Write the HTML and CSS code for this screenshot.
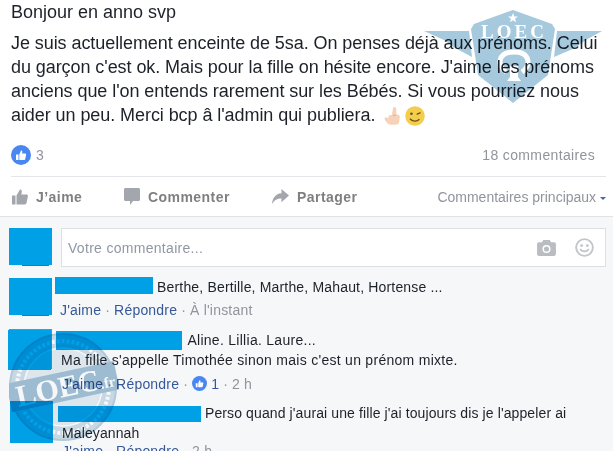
FILE: index.html
```html
<!DOCTYPE html>
<html lang="fr">
<head>
    <meta charset="UTF-8">
    <title>Bonjour en anno svp</title>
    <link rel="stylesheet" href="styles.css">
</head>
<body>
    <div class="post">
        <p class="post-title">Bonjour en anno svp</p>
        <p class="post-text">Je suis actuellement enceinte de 5sa. On penses déjà aux prénoms. Celui du garçon c'est ok. Mais pour la fille on hésite encore. J'aime les prénoms anciens que l'on entends rarement sur les Bébés. Si vous pourriez nous aider un peu. Merci bcp â l'admin qui publiera.
            <svg class="emoji" viewBox="0 0 18 20"><path fill="#f6d3b8" d="M11 1c1.200 0 1.800 1 1.800 2.200V8l2 .8c1.300.5 1.700 1.200 1.500 2.500l-.7 4.700c-.3 1.700-1.500 2.700-3.300 2.700H7.500c-2 0-3-.8-4-2L1.400 14c-.7-1-.4-2 .4-2.500.8-.5 1.400-.3 2.200.3l1 .8V10c.8-.9 2.400-1.200 3.300-.7l1-6C9.500 2 10 1 11 1z"/><path fill="#e6b18e" d="M9.500 9h3v1h-3z"/></svg><svg class="emoji wink" viewBox="0 0 18 18"><circle cx="9" cy="9" r="8.800" fill="#f3cd4b"/><path fill="none" stroke="#6b5320" stroke-width="1.200" d="M4.500 11.500c2 2.500 6 2.800 8.500.5M10.500 7.500l3.500-1.500"/><circle cx="5.800" cy="7" r="1.200" fill="#6b5320"/></svg>
        </p>
        <div class="stats">
            <span class="stats-likes">
                <svg class="like-badge" viewBox="0 0 20 20"><circle cx="10" cy="10" r="10" fill="#4a86f0"/><path fill="#fff" d="M5 9.500h2.500V15H5zM8.300 9.500 10 5.500c.9 0 1.400.6 1.300 1.500l-.2 1.600h3c.7 0 1.100.6 1 1.200l-.8 3.900c-.1.800-.6 1.300-1.400 1.300H8.300z"/></svg>
                3
            </span>
            <span>18 commentaires</span>
        </div>
        <div class="actions">
            <span class="action action-like">
                <svg class="action-icon" viewBox="0 0 16 16"><path fill="#a3a6ad" d="M0 7h3.500v9H0zM4.500 7 8 1c1.300 0 2 .9 1.800 2L9.300 6H14.500c1 0 1.600.8 1.400 1.700l-1.300 6.600c-.2 1-.9 1.700-1.900 1.700H4.500z"/></svg>J’aime
            </span>
            <span class="action action-comment">
                <svg class="action-icon" viewBox="0 0 16 17"><path fill="#a3a6ad" d="M1.500 0h13C15.400 0 16 .6 16 1.500v10c0 .9-.6 1.500-1.500 1.500H9l-3 4v-4H1.500C.6 13 0 12.400 0 11.500v-10C0 .6.600 0 1.500 0z"/></svg>Commenter
            </span>
            <span class="action action-share">
                <svg class="action-icon" viewBox="0 0 18 16"><path fill="#a3a6ad" d="M10 0l8 7-8 7V10C5.500 10 2.500 11.500 0 16c.5-6 3.500-11 10-11.500z"/></svg>Partager
            </span>
            <span class="sort">Commentaires principaux <i class="caret"></i></span>
        </div>
    </div>

    <div class="comments">
        <div class="compose">
            <div class="avatar"></div>
            <div class="compose-box">
                <span>Votre commentaire...</span>
                <svg class="compose-icon" viewBox="0 0 20 17"><path fill="#b9bcc1" d="M6.500 0h7l1.300 2.500H18c1.200 0 2 .8 2 2V15c0 1.200-.8 2-2 2H2c-1.200 0-2-.8-2-2V4.500c0-1.200.8-2 2-2h3.200z"/><circle cx="10" cy="9.500" r="4.300" fill="#fff"/><circle cx="10" cy="9.500" r="2.700" fill="#b9bcc1"/></svg>
                <svg class="compose-icon smile" viewBox="0 0 20 20"><circle cx="10" cy="10" r="8.800" fill="none" stroke="#c2c5ca" stroke-width="2"/><circle cx="7" cy="8" r="1.500" fill="#c2c5ca"/><circle cx="13" cy="8" r="1.500" fill="#c2c5ca"/><path fill="none" stroke="#c2c5ca" stroke-width="1.800" d="M5.500 11.500c1.500 3.500 7.500 3.500 9 0"/></svg>
            </div>
        </div>

        <div class="comment comment-one">
            <div class="avatar"></div>
            <div class="comment-body">
                <p class="comment-text"><span class="name name-one"></span> Berthe, Bertille, Marthe, Mahaut, Hortense ...</p>
                <p class="comment-meta"><a>J'aime</a><i class="sep">·</i><a>Répondre</a><i class="sep">·</i><span>À l'instant</span></p>
            </div>
        </div>

        <div class="comment comment-two">
            <div class="avatar"></div>
            <div class="comment-body">
                <p class="comment-text"><span class="name name-two"></span> Aline. Lillia. Laure...</p>
                <p class="comment-text">Ma fille s'appelle Timothée sinon mais c'est un prénom mixte.</p>
                <p class="comment-meta"><a>J'aime</a><i class="sep">·</i><a>Répondre</a><i class="sep">·</i><svg class="like-small" viewBox="0 0 20 20"><circle cx="10" cy="10" r="10" fill="#4a86f0"/><path fill="#fff" d="M5 9.500h2.500V15H5zM8.300 9.500 10 5.500c.9 0 1.400.6 1.300 1.500l-.2 1.600h3c.7 0 1.100.6 1 1.200l-.8 3.900c-.1.800-.6 1.300-1.400 1.300H8.300z"/></svg> <a>1</a><i class="sep">·</i><span>2 h</span></p>
            </div>
        </div>

        <div class="comment comment-three">
            <div class="avatar"></div>
            <div class="comment-body">
                <p class="comment-text"><span class="name name-three"></span> Perso quand j'aurai une fille j'ai toujours dis je l'appeler ai Maleyannah</p>
                <p class="comment-meta"><a>J'aime</a><i class="sep">·</i><a>Répondre</a><i class="sep">·</i><span>2 h</span></p>
            </div>
        </div>
    </div>

    <svg class="mark mark-shield" viewBox="0 0 193 110">
        <path fill="#a6c9dd" d="M4 31h45l3 26-17-9-11-8zM182 31h-45l-3 26 21-9 11-8z"/>
        <path fill="#a6c9dd" d="M93 10l39 14 3 5-7 46-35 28-35-28-7-46 3-5z"/>
        <path fill="#fff" d="M93 13l1.300 3.500h3.700l-3 2.200 1.100 3.600-3.100-2.100-3.100 2.100 1.100-3.600-3-2.200h3.700z"/>
        <text x="94" y="38" text-anchor="middle" class="mark-label">LOEC</text>
        <path fill="none" stroke="#fff" stroke-width="5" d="M86 72c-9-6-9-20 8-20s17 14 8 20"/>
        <path fill="#fff" d="M90 66h8v11l3 4H87l3-4z"/>
    </svg>

    <svg class="mark mark-stamp" viewBox="0 0 110 112">
        <circle cx="54" cy="55" r="53" fill="#cfdfe9" stroke="#b8d0df" stroke-width="2"/>
        <circle cx="54" cy="55" r="46" fill="none" stroke="#fff" stroke-width="4" stroke-dasharray="3 2"/>
        <circle cx="54" cy="55" r="39" fill="#e6eef3" stroke="#fff" stroke-width="1.500"/>
        <g transform="rotate(-12 54 55)">
            <path fill="#a3c2d6" d="M-1 40h110v29H-1z"/>
            <text x="6" y="65" class="stamp-label">LOEC<tspan class="stamp-small">.fr</tspan></text>
        </g>
    </svg>
</body>
</html>
```

FILE: styles.css
```css
* {
    margin: 0;
    padding: 0;
    box-sizing: border-box;
}

html, body {
    height: 451px;
    overflow: hidden;
}

body {
    position: relative;
    font-family: 'Liberation Sans', Arial, sans-serif;
    color: #1d2129;
    background-color: #f6f7f9;
}

.post {
    height: 217px;
    padding: 0 7px 0 11px;
    background-color: #ffffff;
    border-bottom: 1px solid #e1e2e5;
}

.post-title {
    font-size: 18px;
    line-height: 24px;
}

.post-text {
    width: 592px;
    margin-top: 7px;
    font-size: 18px;
    line-height: 24px;
    letter-spacing: -0.07px;
}

.emoji {
    width: 19px;
    height: 20px;
    margin-left: 3px;
    vertical-align: -5px;
}

.wink {
    width: 20px;
    margin-left: 3px;
}

.stats {
    display: flex;
    justify-content: space-between;
    align-items: center;
    height: 22px;
    margin-top: 17px;
    padding-right: 11px;
    font-size: 14px;
    letter-spacing: 0.35px;
    color: #90949c;
}

.stats-likes {
    display: flex;
    align-items: center;
    gap: 5px;
}

.like-badge {
    width: 20px;
    height: 20px;
}

.actions {
    display: flex;
    align-items: center;
    height: 39px;
    margin-top: 10px;
    padding-top: 1px;
    border-top: 1px solid #e5e6e9;
    font-size: 14px;
    font-weight: 700;
    letter-spacing: 0.45px;
    color: #7f7f7f;
}

.action {
    display: flex;
    align-items: center;
}

.action-icon {
    width: 16px;
    height: 17px;
    margin-right: 8px;
}

.action-like {
    width: 113px;
    padding-left: 1px;
}

.action-comment {
    width: 148px;
}

.action-share .action-icon {
    width: 17px;
}

.sort {
    margin-left: auto;
    font-weight: 400;
    letter-spacing: 0;
    color: #90949c;
}

.caret {
    display: inline-block;
    border: 3px solid transparent;
    border-top-color: #4267b2;
    border-bottom-width: 0;
    vertical-align: 2px;
}

.comments {
    padding-top: 11px;
}

.avatar {
    position: relative;
    flex: none;
    width: 43px;
    height: 37px;
    background-color: #00a0e6;
}

/* bits of the photo left under the blue cover */
.avatar::after {
    content: "";
    position: absolute;
    left: 13px;
    bottom: -1px;
    width: 27px;
    height: 1px;
    background-color: #5a6a72;
}

.compose {
    display: flex;
    gap: 9px;
    padding-left: 9px;
}

.compose-box {
    display: flex;
    align-items: center;
    width: 545px;
    height: 39px;
    padding: 0 11px 0 6px;
    background-color: #ffffff;
    border: 1px solid #dddfe2;
    font-size: 14px;
    letter-spacing: 0.3px;
    color: #9197a3;
}

.compose-box span {
    flex: 1;
}

.compose-icon {
    width: 19px;
    height: 16px;
}

.smile {
    width: 19px;
    height: 19px;
    margin-left: 19px;
}

.comment {
    display: flex;
    font-size: 14px;
}

.comment-text {
    line-height: 20px;
}

.comment-meta {
    color: #90949c;
    line-height: 20px;
    letter-spacing: 0.2px;
}

.comment-meta a {
    color: #365899;
}

.sep {
    margin: 0 4px;
    font-style: normal;
}

.name {
    display: inline-block;
    background-color: #00a0e6;
}

.like-small {
    width: 15px;
    height: 15px;
    vertical-align: -2px;
}

.comment-one {
    margin-top: 11px;
    padding-left: 9px;
}

.comment-one .comment-body {
    margin-left: 3px;
    letter-spacing: 0.17px;
}

.comment-one .comment-text {
    margin-top: -1px;
}

.comment-one .comment-meta {
    margin: 3px 0 0 5px;
}

.name-one {
    width: 98px;
    height: 17px;
    vertical-align: -2px;
}

.comment-two {
    margin-top: 10px;
    padding-left: 8px;
}

.comment-two .avatar {
    height: 40px;
    box-shadow: 1px -1px 0 #7d8a8e;
}

.comment-two .avatar::after {
    display: none;
}

.comment-two .comment-body {
    margin-left: 5px;
    letter-spacing: 0.28px;
}

.comment-two .comment-text + .comment-text {
    margin-left: 5px;
}

.comment-two .comment-meta {
    margin: 4px 0 0 6px;
}

.name-two {
    width: 126px;
    height: 19px;
    margin-right: 2px;
    vertical-align: -5px;
}

.comment-three {
    margin-top: 7px;
    padding-left: 10px;
}

.comment-three .avatar {
    height: 42px;
}

.comment-three .avatar::after {
    display: none;
}

.comment-three .comment-body {
    width: 520px;
    margin: 2px 0 0 9px;
    letter-spacing: 0.11px;
}

.comment-three .comment-meta {
    margin-top: -2px;
}

.name-three {
    width: 143px;
    height: 16px;
    margin-left: -4px;
    vertical-align: -4px;
}

.mark {
    position: absolute;
    mix-blend-mode: multiply;
}

.mark-shield {
    top: 0;
    left: 420px;
    width: 193px;
    height: 110px;
}

.mark-label {
    font-family: 'Liberation Serif', serif;
    font-size: 19px;
    font-weight: 700;
    letter-spacing: 3px;
    fill: #ffffff;
}

.mark-stamp {
    top: 332px;
    left: 9px;
    width: 110px;
    height: 112px;
}

.stamp-label {
    font-family: 'Liberation Serif', serif;
    font-size: 30px;
    font-weight: 700;
    fill: #ffffff;
}

.stamp-small {
    font-size: 15px;
}
```
